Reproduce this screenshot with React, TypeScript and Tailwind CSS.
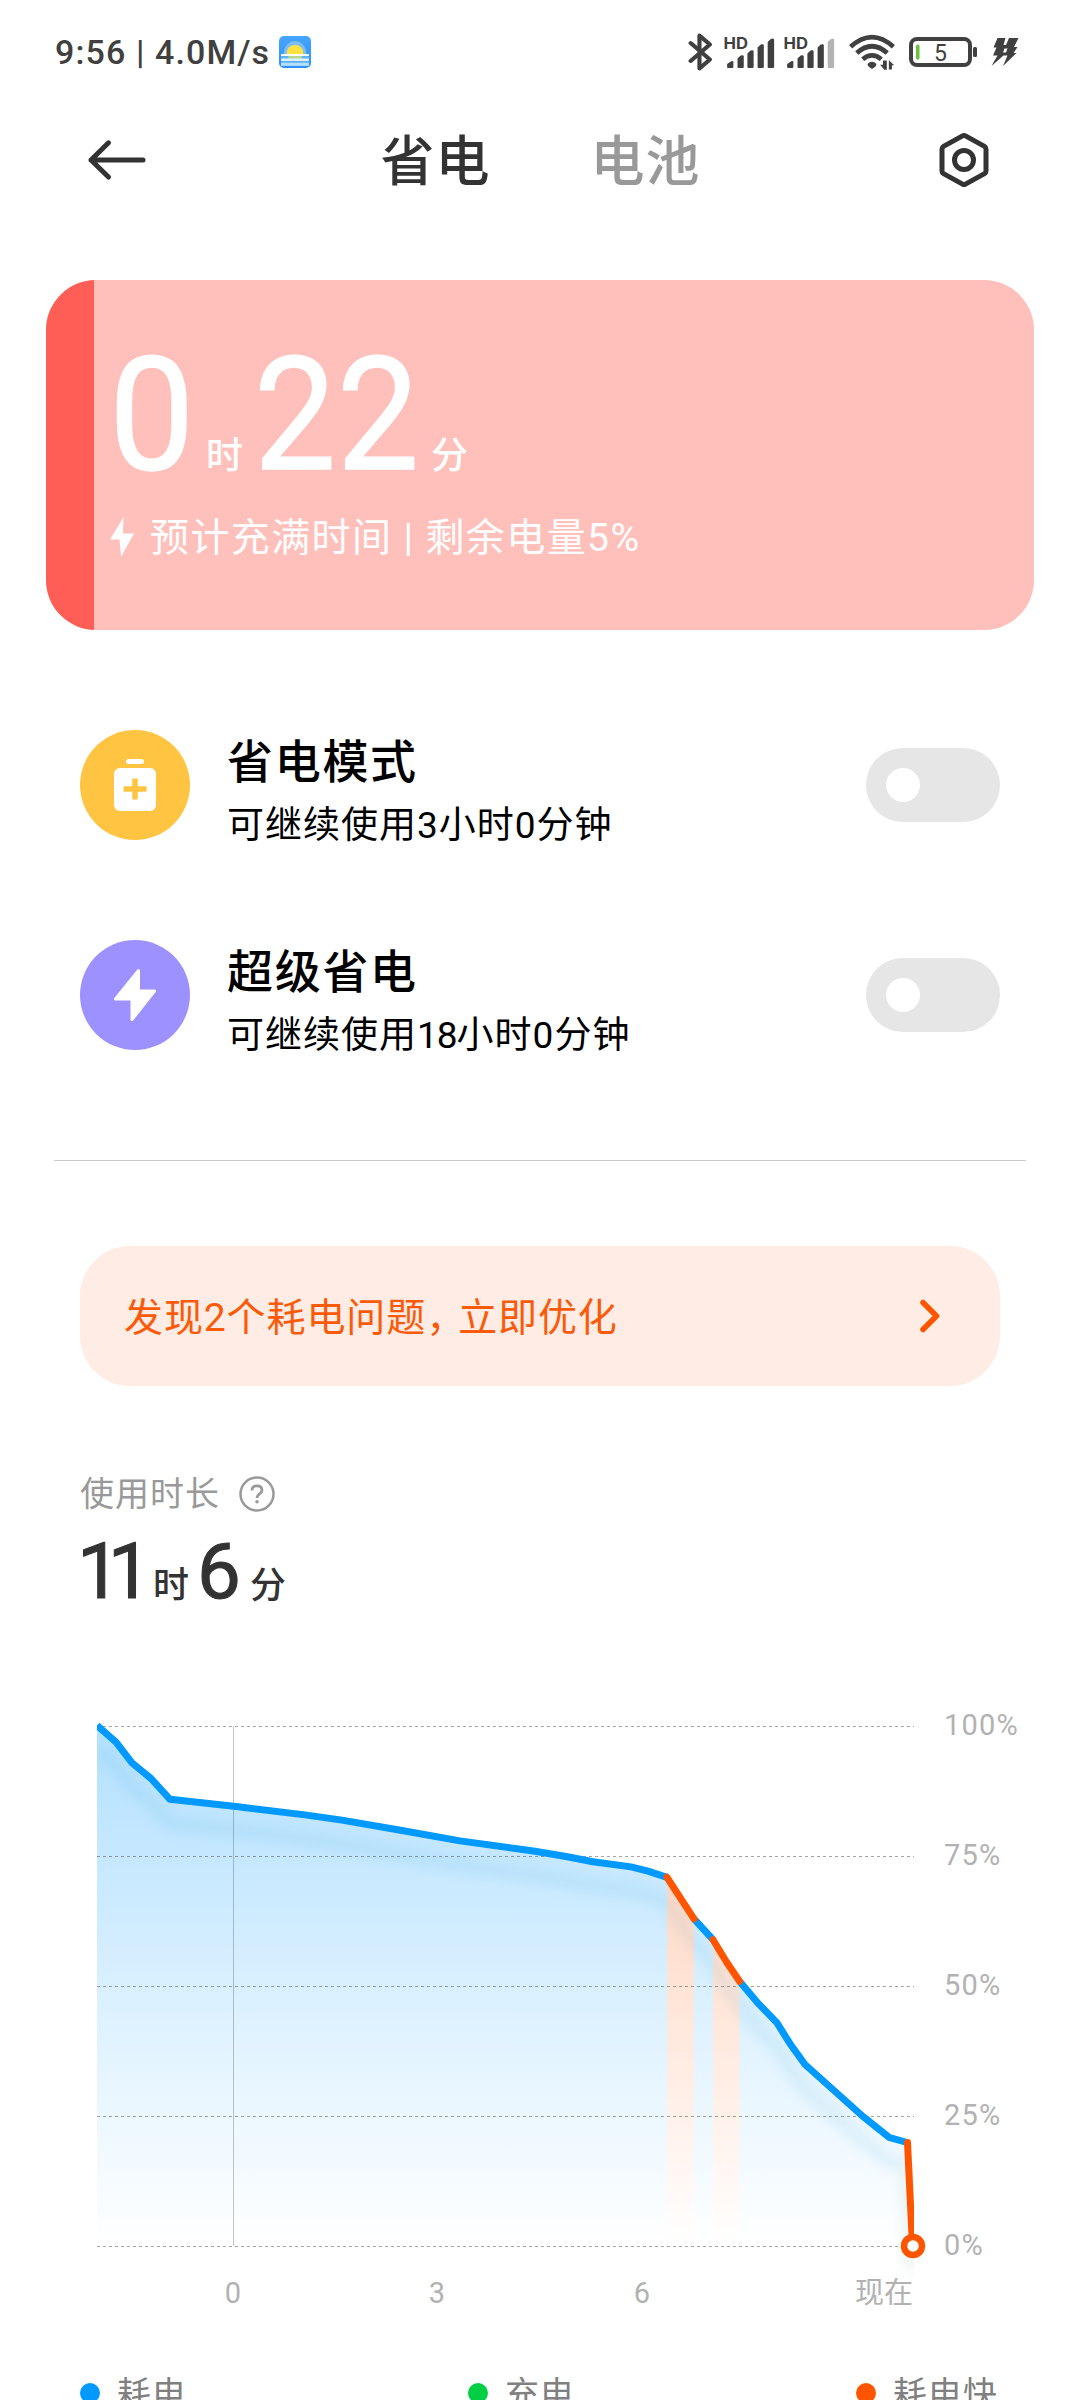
import type { ReactNode } from 'react';

interface SignalProps {
  weak?: boolean;
}

interface ModeRowProps {
  icon: ReactNode;
  iconClass: string;
  title: string;
  description: ReactNode;
}

interface Segment {
  color: 'blue' | 'orange';
  points: [number, number][];
}

const BLUE = '#0099ff';
const ORANGE = '#ff5500';

// [x, battery percent]
const segments: Segment[] = [
  {
    color: 'blue',
    points: [
      [97, 100.2], [116, 97], [132, 93], [151, 90], [170, 86], [236, 84.6], [305, 83], [342, 82],
      [402, 80], [460, 78], [535, 76], [566, 75], [593, 74], [631, 73], [648, 72.2], [667, 71],
    ],
  },
  { color: 'orange', points: [[667, 71], [694, 63]] },
  { color: 'blue', points: [[694, 63], [713, 59]] },
  { color: 'orange', points: [[713, 59], [726.5, 54.7], [739.5, 51]] },
  {
    color: 'blue',
    points: [
      [739.5, 51], [757, 47], [777, 43], [790, 39], [805, 35], [834, 30], [863, 25], [889, 21], [907, 20],
    ],
  },
];

const percentLabels = [100, 75, 50, 25, 0];

const yOf = (percent: number) => 26.5 + (100 - percent) * 5.2;
const toLine = (points: [number, number][]) => points.map(([x, p]) => `${x},${yOf(p)}`).join(' ');
const toArea = (points: [number, number][]) =>
  `${points[0][0]},${yOf(0)} ${toLine(points)} ${points[points.length - 1][0]},${yOf(0)}`;

function WeatherIcon() {
  return (
    <svg width="32" height="32" viewBox="0 0 31 32" preserveAspectRatio="none">
      <defs>
        <linearGradient id="sky" x1="0" y1="0" x2="0" y2="1">
          <stop offset="0" stopColor="#45a5ff" />
          <stop offset="1" stopColor="#2f8ff5" />
        </linearGradient>
      </defs>
      <rect width="31" height="32" rx="5" fill="url(#sky)" />
      <path d="M4.5 18a11 13 0 0 1 22 0z" fill="#7dbdf5" />
      <circle cx="15.5" cy="17" r="8" fill="#ffe23f" />
      <rect x="2" y="18" width="27" height="12" fill="#5fb4f8" />
      <path d="M9 20h13v3H9z" fill="#b5d88c" />
      <path d="M2 19h27" stroke="#fff" strokeWidth="2" />
      <path d="M2 23.7h27" stroke="#e2f3ff" strokeWidth="2.4" />
      <path d="M2 28.3h27" stroke="#b5e0ff" strokeWidth="3" />
    </svg>
  );
}

function BluetoothIcon() {
  return (
    <svg width="25" height="38" viewBox="0 0 24 38" preserveAspectRatio="none" fill="none" stroke="#404040" strokeWidth="4" strokeLinejoin="round" strokeLinecap="round">
      <path d="M2.5 10 21 26.5 11 35.5V2.5L21 11.5 2.5 28" />
    </svg>
  );
}

function SignalIcon({ weak }: SignalProps) {
  return (
    <svg width="52" height="38" viewBox="0 -2 50 38" preserveAspectRatio="none" fill="#404040">
      <text x="-0.5" y="13.8" fontSize="16" fontWeight="700" textLength="23.5" className="font-[Inter,sans-serif]">
        HD
      </text>
      <path d="M3 33V29L7 26.3Q9 25.3 9 27V32Q9 33 8 33H4Q3 33 3 32z" />
      <path d="M13 32V23.5L16 20.5Q19 19.5 19 21.5V32Q19 33 18 33H14Q13 33 13 32z" />
      <path d="M22.5 32V18.5L25.5 15.5Q28.5 14.5 28.5 16.5V32Q28.5 33 27.5 33H23.5Q22.5 33 22.5 32z" />
      <path d="M32.3 32V12.5L35.3 9.5Q38.3 8.5 38.3 10.5V32Q38.3 33 37.3 33H33.3Q32.3 33 32.3 32z" />
      <path
        d="M42 32V7L45 4Q48.2 2.5 48.2 5V32Q48.2 33 47.2 33H43Q42 33 42 32z"
        fill={weak ? '#b3b3b3' : '#404040'}
      />
    </svg>
  );
}

function WifiIcon() {
  return (
    <svg width="47" height="36" viewBox="0 0 46 36" preserveAspectRatio="none">
      <g fill="none" stroke="#404040" strokeWidth="4.6">
        <path d="M1.6 12.8Q22.5-6.5 43.4 12.8" />
        <path d="M7.6 19Q22.5 5.5 37.4 19" />
        <path d="M13.4 25.2Q22.5 17.5 31.6 25.2" />
      </g>
      <path d="M18 30Q22.5 25.5 27 30L26 32.5 22.5 35 19 32.5z" fill="#404040" />
      <path d="M37 26.5v9.3h-2.500l-4-5h2.800V26.500zM39 35.500v-9.300l5.300 5h-2.300v4.300z" fill="#404040" />
    </svg>
  );
}

function BatteryIcon() {
  return (
    <svg width="69" height="32" viewBox="0 0 69 32">
      <rect x="2" y="3" width="59" height="26" rx="6" fill="none" stroke="#404040" strokeWidth="4" />
      <rect x="64" y="11" width="4" height="10" rx="1.5" fill="#404040" />
      <rect x="7" y="8.5" width="3.5" height="15" rx="1.5" fill="#6cc13c" />
      <text x="31.5" y="24.5" fontSize="23" textAnchor="middle" fill="#404040" className="font-[Roboto,sans-serif]">
        5
      </text>
    </svg>
  );
}

function ChargingIcon() {
  return (
    <svg width="28" height="30" viewBox="0 0 28 30" fill="#404040">
      <path d="M6.500 1H14.500L12.500 8H15L18 1H27.500L23 10H26.500L22.500 16H25.500L12 29 16.500 18.500H12.500L0.500 29 6.500 18.500H2L5.500 10.500H2.500z" />
      <path d="M12 15.500h3l1.500-4h-3z" fill="#fff" />
    </svg>
  );
}

function StatusBar() {
  return (
    <div className="flex h-[104px] shrink-0 items-center justify-between pr-[61px] pl-[55px] text-[#404040]">
      <div className="flex items-center">
        <span className="w-[224px] text-[34px] leading-[40px] font-medium tracking-[1.1px] whitespace-nowrap">
          9:56 | 4.0M/s
        </span>
        <WeatherIcon />
      </div>
      <div className="flex items-center">
        <BluetoothIcon />
        <div className="ml-[11px] flex gap-2">
          <SignalIcon />
          <SignalIcon weak />
        </div>
        <div className="ml-[13px]">
          <WifiIcon />
        </div>
        <div className="ml-[13px]">
          <BatteryIcon />
        </div>
        <div className="ml-[13px]">
          <ChargingIcon />
        </div>
      </div>
    </div>
  );
}

function Header() {
  return (
    <div className="flex h-[112px] shrink-0 items-center justify-between pr-[91px] pl-[87px]">
      <button aria-label="返回">
        <svg width="60" height="42" viewBox="0 0 60 42" fill="none" stroke="#333" strokeWidth="5" strokeLinecap="round" strokeLinejoin="round">
          <path d="M56 21H4M21.5 3.8 4 21l17.5 17" />
        </svg>
      </button>
      <div className="flex gap-[100px] pt-[5px] pr-[5px] text-[54px] leading-[64px] font-medium tracking-[1px]">
        <span className="text-[#333]">省电</span>
        <span className="text-[#999]">电池</span>
      </div>
      <button aria-label="设置">
        <svg width="50" height="56" viewBox="0 0 50 56" fill="none" stroke="#333" strokeWidth="5">
          <path d="M23.5 3.9Q25 3 26.5 3.9L45.5 14.3Q47 15.2 47 17V39Q47 40.8 45.5 41.7L26.5 52.1Q25 53 23.5 52.1L4.5 41.7Q3 40.8 3 39V17Q3 15.2 4.5 14.3z" />
          <circle cx="25" cy="28" r="9.5" />
        </svg>
      </button>
    </div>
  );
}

function ChargeCard() {
  return (
    <div className="mx-[46px] mt-16 flex h-[350px] shrink-0 overflow-hidden rounded-[50px] bg-[#ffbfba] text-white">
      <div className="w-12 bg-[#ff5e57]" />
      <div className="pl-4">
        <div className="mt-[55px] flex h-[160px] items-baseline">
          <span className="-ml-[1px] w-[97px] origin-left scale-x-[0.97] text-[157px] leading-[160px] [-webkit-text-stroke:1.5px_#fff]">0</span>
          <span className="w-[48px] text-[37px] font-medium">时</span>
          <span className="w-[177px] origin-left scale-x-[0.93] text-[157px] leading-[160px] tracking-[1px] [-webkit-text-stroke:1.5px_#fff]">22</span>
          <span className="text-[37px] font-medium">分</span>
        </div>
        <div className="mt-[12px] flex items-center">
          <svg width="24" height="40" viewBox="0 0 24 40" fill="#fff">
            <path d="M13.5 0 0 22.5H9.5L11 40 24 16.5H13z" />
          </svg>
          <span className="ml-[16px] pt-[3px] text-[39px] leading-[56px] tracking-[1.4px]">预计充满时间 | 剩余电量5%</span>
        </div>
      </div>
    </div>
  );
}

function Toggle() {
  return (
    <button role="switch" aria-checked="false" className="flex h-[74px] w-[134px] items-center rounded-full bg-[#e6e6e6] pl-5">
      <span className="size-[34px] rounded-full bg-white" />
    </button>
  );
}

function ModeRow({ icon, iconClass, title, description }: ModeRowProps) {
  return (
    <div className="flex h-[110px] shrink-0 items-center px-20">
      <div className={`flex size-[110px] items-center justify-center rounded-full ${iconClass}`}>{icon}</div>
      <div className="mt-[18px] ml-[37px] flex-1 text-black">
        <div className="text-[46px] leading-[64px] font-medium tracking-[1.7px]">{title}</div>
        <div className="text-[37px] leading-[64px] tracking-[1px]">{description}</div>
      </div>
      <Toggle />
    </div>
  );
}

function Usage() {
  return (
    <div className="mt-[82px] shrink-0 px-20">
      <div className="flex items-center text-[#999]">
        <span className="text-[34px] leading-[52px] tracking-[1px]">使用时长</span>
        <svg className="ml-[19px]" width="36" height="36" viewBox="0 0 36 36" fill="none" stroke="#999" strokeWidth="2.5">
          <circle cx="18" cy="18" r="16.5" />
          <path d="M13 14.5Q13 9.8 18 9.8T23 14.3Q23 16.3 20.3 18.2 18 19.8 18 22" strokeWidth="2.8" />
          <circle cx="18" cy="25.8" r="1.8" fill="#999" stroke="none" />
        </svg>
      </div>
      <div className="flex h-[102px] items-baseline pt-[2px] text-[#333]">
        <span className="-ml-[3px] w-[76px] text-[78px] leading-[100px] tracking-[-13px] [-webkit-text-stroke:1px_#333]">11</span>
        <span className="w-[44px] text-[36px] font-medium">时</span>
        <span className="w-[53px] text-[78px] leading-[100px] [-webkit-text-stroke:1px_#333]">6</span>
        <span className="text-[36px] font-medium">分</span>
      </div>
    </div>
  );
}

function BatteryChart() {
  return (
    <svg width="1080" height="640" viewBox="0 0 1080 640" className="mt-[78px] shrink-0 font-[Roboto,'Noto_Sans_CJK_SC',sans-serif]">
      <defs>
        <linearGradient id="blue" gradientUnits="userSpaceOnUse" x1="0" y1="26" x2="0" y2="546">
          <stop offset="0" stopColor={BLUE} stopOpacity="0.3" />
          <stop offset="1" stopColor={BLUE} stopOpacity="0" />
        </linearGradient>
        <linearGradient id="orange" gradientUnits="userSpaceOnUse" x1="0" y1="26" x2="0" y2="546">
          <stop offset="0" stopColor={ORANGE} stopOpacity="0.32" />
          <stop offset="1" stopColor={ORANGE} stopOpacity="0" />
        </linearGradient>
        <filter id="soft" x="-10%" y="-10%" width="120%" height="120%">
          <feGaussianBlur stdDeviation="6" />
        </filter>
        <clipPath id="plot">
          <rect x="97" y="20" width="817" height="560" />
        </clipPath>
      </defs>

      {/* Filled areas */}
      {segments.map((s, i) => (
        <polygon key={i} points={toArea(s.points)} fill={`url(#${s.color})`} />
      ))}

      {/* Grid */}
      <g stroke="#000" strokeOpacity="0.35">
        {percentLabels.map((p) => (
          <path key={p} d={`M97 ${yOf(p)}H914`} strokeDasharray="3 3" />
        ))}
        <path d="M233.5 26V546" strokeOpacity="0.22" />
      </g>

      <g clipPath="url(#plot)" fill="none" strokeWidth="7" strokeLinejoin="round">
        {/* Shadow under the line */}
        <g filter="url(#soft)" opacity="0.07" strokeWidth="16" transform="translate(0 24)">
          <polyline points={segments.map((s) => toLine(s.points)).join(' ')} stroke="#0088bb" />
          <path d="M907 442 912 546" stroke="#338855" />
        </g>
        {segments.filter((s) => s.color === 'blue').map((s, i) => (
          <polyline key={i} points={toLine(s.points)} stroke={BLUE} />
        ))}
        {segments.filter((s) => s.color === 'orange').map((s, i) => (
          <polyline key={i} points={toLine(s.points)} stroke={ORANGE} strokeLinecap="round" />
        ))}
        <path d="M907.5 442.5 912.5 546" stroke={ORANGE} strokeLinecap="round" />
      </g>
      <circle cx="913" cy="546" r="9" fill="#fff" stroke={ORANGE} strokeWidth="6.5" />

      {/* Axis labels */}
      <g fill="#b2b2b2" fontSize="29">
        {percentLabels.map((p) => (
          <text key={p} x="944" y={yOf(p) + 8.5} letterSpacing="1.2">
            {p}%
          </text>
        ))}
        <g textAnchor="middle">
          <text x="233" y="603">0</text>
          <text x="437" y="603">3</text>
          <text x="642" y="603">6</text>
        </g>
        <text x="855" y="603">现在</text>
      </g>
    </svg>
  );
}

function Legend() {
  const items = [
    { label: '耗电', dot: 'bg-[#0099ff]' },
    { label: '充电', dot: 'bg-[#00cf46]' },
    { label: '耗电快', dot: 'bg-[#ff5500]' },
  ];

  return (
    <div className="mt-[27px] flex shrink-0 pl-20">
      {items.map((item) => (
        <div key={item.label} className="flex w-[388px] shrink-0 items-center">
          <span className={`size-5 rounded-full ${item.dot}`} />
          <span className="ml-[17px] pt-[2px] text-[34px] leading-[50px] tracking-[1px] text-[#808080]">{item.label}</span>
        </div>
      ))}
    </div>
  );
}

export default function App() {
  return (
    <div className="flex h-[2400px] w-[1080px] flex-col overflow-hidden bg-white font-[Roboto,'Noto_Sans_CJK_SC',sans-serif]">
      <StatusBar />
      <Header />
      <ChargeCard />

      {/* Saving modes */}
      <div className="mt-[100px] flex shrink-0 flex-col gap-[100px]">
        <ModeRow
          iconClass="bg-[#ffc542]"
          title="省电模式"
          description="可继续使用3小时0分钟"
          icon={
            <svg width="42" height="52" viewBox="0 0 42 52" fill="#fff">
              <rect x="12" y="0" width="18" height="5" rx="2.5" />
              <rect x="0" y="9" width="42" height="43" rx="6" />
              <path d="M21 19.5v21M9.5 30h23" stroke="#ffc542" strokeWidth="5.5" />
            </svg>
          }
        />
        <ModeRow
          iconClass="bg-[#9d91ff]"
          title="超级省电"
          description={
            <>
              可继续使用<span className="tracking-[-1px]">18</span>小时0分钟
            </>
          }
          icon={
            <svg width="44" height="54" viewBox="0 0 44 54" fill="#fff" stroke="#fff" strokeWidth="3" strokeLinejoin="round">
              <path d="M25.5 2.5 2.5 31H19V51.5L41.500 23H25.5z" />
            </svg>
          }
        />
      </div>

      <div className="mx-[54px] mt-[110px] h-[1px] shrink-0 bg-[#cccccc]" />

      {/* Issues banner */}
      <div className="mx-20 mt-[85px] flex h-[140px] shrink-0 items-center justify-between rounded-[50px] bg-[#ffede5] pr-[59px] pl-[44px]">
        <span className="pt-[3px] text-[39px] leading-[56px] tracking-[0.9px] text-[#fa5a0a]">
          发现2个耗电问题<span className="tracking-[-7px]">，</span>立即优化
        </span>
        <svg width="22" height="34" viewBox="0 0 22 34" fill="none" stroke="#ff5500" strokeWidth="5.5" strokeLinecap="round" strokeLinejoin="round">
          <path d="M4 3.5 17.5 17 4 30.5" />
        </svg>
      </div>

      <Usage />
      <BatteryChart />
      <Legend />
    </div>
  );
}
